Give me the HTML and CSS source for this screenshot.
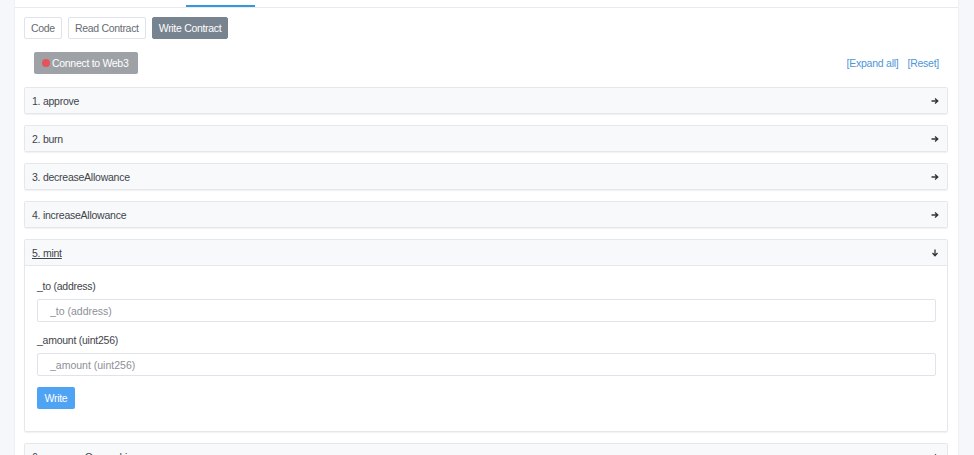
FILE: index.html
```
<!DOCTYPE html>
<html>
<head>
<meta charset="utf-8">
<link rel="stylesheet" href="styles.css">
</head>
<body>
<div class="card">
  <div class="nav"><span class="nav-active"></span></div>
  <div class="content">
    <div class="tabs">
      <button class="tab">Code</button>
      <button class="tab">Read Contract</button>
      <button class="tab tab-on">Write Contract</button>
    </div>
    <div class="toolbar">
      <button class="connect"><span class="dot"></span>Connect to Web3</button>
      <div class="links"><a>[Expand all]</a><a>[Reset]</a></div>
    </div>
    <div class="acc">
      <div class="acc-head"><span>1. approve</span><svg class="arr" viewBox="0 0 8 8"><path d="M0.5 4H6.5M4 1.5L6.8 4L4 6.5" fill="none" stroke="#333" stroke-width="1.3"/></svg></div>
    </div>
    <div class="acc">
      <div class="acc-head"><span>2. burn</span><svg class="arr" viewBox="0 0 8 8"><path d="M0.5 4H6.5M4 1.5L6.8 4L4 6.5" fill="none" stroke="#333" stroke-width="1.3"/></svg></div>
    </div>
    <div class="acc">
      <div class="acc-head"><span>3. decreaseAllowance</span><svg class="arr" viewBox="0 0 8 8"><path d="M0.5 4H6.5M4 1.5L6.8 4L4 6.5" fill="none" stroke="#333" stroke-width="1.3"/></svg></div>
    </div>
    <div class="acc">
      <div class="acc-head"><span>4. increaseAllowance</span><svg class="arr" viewBox="0 0 8 8"><path d="M0.5 4H6.5M4 1.5L6.8 4L4 6.5" fill="none" stroke="#333" stroke-width="1.3"/></svg></div>
    </div>
    <div class="acc">
      <div class="acc-head"><span class="u">5. mint</span><svg class="arr" viewBox="0 0 8 8"><path d="M4 0.5V6.5M1.5 4L4 6.8L6.5 4" fill="none" stroke="#333" stroke-width="1.3"/></svg></div>
      <div class="acc-body">
        <label class="lbl">_to (address)</label>
        <input class="inp" placeholder="_to (address)">
        <label class="lbl">_amount (uint256)</label>
        <input class="inp" placeholder="_amount (uint256)">
        <button class="write">Write</button>
      </div>
    </div>
    <div class="acc">
      <div class="acc-head"><span>6. renounceOwnership</span><svg class="arr" viewBox="0 0 8 8"><path d="M0.5 4H6.5M4 1.5L6.8 4L4 6.5" fill="none" stroke="#333" stroke-width="1.3"/></svg></div>
    </div>
  </div>
</div>
</body>
</html>
```
FILE: styles.css
```
* { box-sizing: border-box; }
html, body { margin: 0; padding: 0; }
body {
  background: #f6f7fa;
  font-family: "Liberation Sans", Arial, sans-serif;
  font-size: 10.5px;
  letter-spacing: -0.25px;
  color: #4a4f55;
  padding: 0 15px 0 14px;
  height: 455px;
  overflow: hidden;
}
.card {
  background: #fff;
  border-left: 1px solid #eef0f4;
  border-right: 1px solid #eef0f4;
  min-height: 600px;
}
.nav {
  height: 8px;
  border-bottom: 1px solid #e7eaf3;
  display: flex;
  align-items: flex-end;
}
.nav-active {
  display: block;
  width: 69px;
  height: 2px;
  margin-left: 171px;
  background: #3498db;
}
.content { padding: 9px 10px 0 9px; }
.tabs { display: flex; gap: 6px; }
.tab {
  font: inherit;
  letter-spacing: -0.3px;
  height: 22px;
  padding: 0 6px;
  border: 1px solid #dfe3ea;
  border-radius: 2px;
  background: #fff;
  color: #666c73;
}
.tab-on {
  background: #77838f;
  border-color: #77838f;
  color: #fff;
}
.toolbar {
  display: flex;
  justify-content: space-between;
  align-items: center;
  margin-top: 13px;
  padding-left: 10px;
}
.connect {
  font: inherit;
  letter-spacing: -0.3px;
  height: 22px;
  width: 104px;
  padding: 0 0 0 8px;
  display: flex;
  align-items: center;
  border: none;
  border-radius: 2px;
  background: #9ea2a7;
  color: #fff;
}
.dot {
  width: 8px;
  height: 8px;
  border-radius: 50%;
  background: #e5545b;
  margin-right: 2px;
}
.links { display: flex; gap: 9px; padding-right: 9px; }
.links a { color: #4e96d8; }
.acc {
  margin-top: 13px;
  border: 1px solid #e4e7ec;
  border-radius: 2px;
  box-shadow: 0 1px 1px rgba(0,0,0,0.06);
}
.acc + .acc { margin-top: 11px; }
.acc-head {
  height: 25px;
  background: #f8f9fa;
  display: flex;
  align-items: center;
  justify-content: space-between;
  padding: 0 8px 0 7px;
  color: #3f444a;
}
.u { text-decoration: underline; }
.arr { width: 8px; height: 8px; }
.acc-body {
  border-top: 1px solid #e4e7ec;
  padding: 13px 11px 22px 12px;
  display: flex;
  flex-direction: column;
  align-items: flex-start;
}
.lbl { color: #3f444a; line-height: 14px; }
.inp {
  width: 100%;
  height: 23px;
  margin: 6px 0 11px;
  border: 1px solid #dfe3ea;
  border-radius: 2px;
  padding: 0 12px;
  font: inherit;
  color: #333;
}
.inp::placeholder { color: #8c9096; }
.write {
  font: inherit;
  letter-spacing: -0.3px;
  height: 22px;
  width: 38px;
  padding: 0;
  border: none;
  border-radius: 2px;
  background: #4ea3f5;
  color: #fff;
}
```
